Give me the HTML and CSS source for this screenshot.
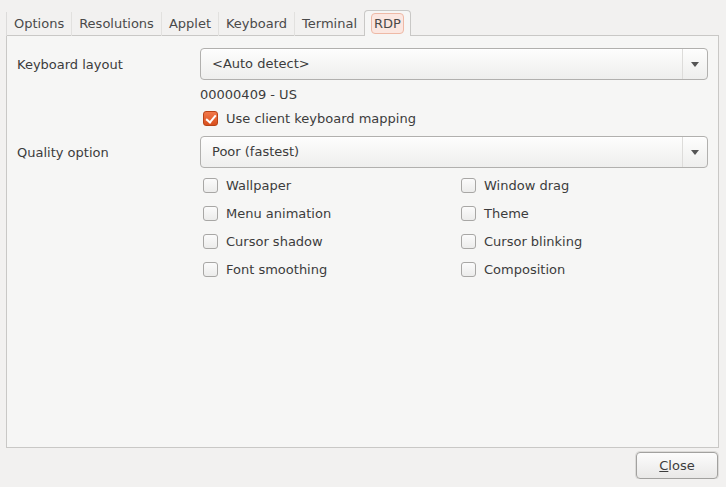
FILE: index.html
```
<!DOCTYPE html>
<html lang="en">
<head>
    <meta charset="UTF-8">
    <title>RDP</title>
    <link rel="stylesheet" href="styles.css">
</head>
<body>
    <div class="dialog">
        <ul class="tabs">
            <li>Options</li>
            <li>Resolutions</li>
            <li>Applet</li>
            <li>Keyboard</li>
            <li>Terminal</li>
            <li class="checked"><span class="focus">RDP</span></li>
        </ul>
        <div class="panel">
            <div class="row">
                <div class="label">Keyboard layout</div>
                <div class="combo"><span>&lt;Auto detect&gt;</span><i class="arrow"></i></div>
            </div>
            <div class="row info">
                <div class="label"></div>
                <div class="value">00000409 - US</div>
            </div>
            <div class="row mapping">
                <div class="label"></div>
                <label class="check on"><b></b>Use client keyboard mapping</label>
            </div>
            <div class="row">
                <div class="label">Quality option</div>
                <div class="combo"><span>Poor (fastest)</span><i class="arrow"></i></div>
            </div>
            <div class="row">
                <div class="label"></div>
                <div class="options">
                    <label class="check"><b></b>Wallpaper</label>
                    <label class="check"><b></b>Window drag</label>
                    <label class="check"><b></b>Menu animation</label>
                    <label class="check"><b></b>Theme</label>
                    <label class="check"><b></b>Cursor shadow</label>
                    <label class="check"><b></b>Cursor blinking</label>
                    <label class="check"><b></b>Font smoothing</label>
                    <label class="check"><b></b>Composition</label>
                </div>
            </div>
        </div>
        <div class="footer">
            <button class="btn"><u>C</u>lose</button>
        </div>
    </div>
</body>
</html>
```

FILE: styles.css
```
* {
    padding: 0;
    margin: 0;
    box-sizing: border-box;
}

body {
    background: #f2f1f0;
    font-family: "DejaVu Sans", sans-serif;
    font-size: 13px;
    color: #3c3c3c;
}

.dialog {
    padding: 10px 7px 0 6px;
}

.tabs {
    list-style: none;
    display: flex;
    height: 26px;
    position: relative;
    z-index: 1;
}

.tabs>li {
    height: 24px;
    margin-top: 2px;
    padding: 0 7px;
    line-height: 24px;
    border-left: 1px solid #e2e1df;
    color: #4a4a4a;
}

.tabs>li:first-child {
    border-left-color: #dcdbda;
}

.tabs .checked {
    margin-top: 0;
    height: 26px;
    padding: 2px 6px 0;
    background: #f6f6f5;
    border: 1px solid #c9c8c6;
    border-bottom: none;
    border-radius: 4px 4px 0 0;
}

.focus {
    display: block;
    height: 21px;
    line-height: 20px;
    padding: 0 2px;
    border: 1px solid #eeb9a6;
    border-radius: 4px;
    background: #fbe7e1;
}

.panel {
    height: 413px;
    margin-top: -1px;
    background: #f6f6f5;
    border: 1px solid #c9c8c6;
    padding: 12px 10px 0 10px;
}

.row {
    display: flex;
    align-items: center;
}

.row.info {
    height: 28px;
}

.row.mapping {
    height: 20px;
    margin-bottom: 8px;
}

.label {
    width: 183px;
    flex: none;
}

.combo {
    flex: 1;
    display: flex;
    height: 32px;
    border: 1px solid #b1b0ae;
    border-radius: 4px;
    background: linear-gradient(#fdfdfd, #eeeeed);
    box-shadow: inset 0 1px 0 #fff;
}

.combo span {
    flex: 1;
    padding-left: 11px;
    line-height: 29px;
}

.arrow {
    width: 25px;
    border-left: 1px solid #dddcda;
    position: relative;
}

.arrow:after {
    content: '';
    position: absolute;
    left: 8px;
    top: 13px;
    border-left: 4px solid transparent;
    border-right: 4px solid transparent;
    border-top: 5px solid #555;
}

.check {
    display: flex;
    align-items: center;
    height: 28px;
}

.mapping .check {
    height: 20px;
}

.check b {
    width: 15px;
    height: 15px;
    margin: 0 8px 0 3px;
    border: 1px solid #a8a7a5;
    border-radius: 3px;
    background: linear-gradient(#fbfbfb, #ececeb);
}

.check.on b {
    border-color: #b84418;
    background: linear-gradient(#f2784a, #d9501e);
    position: relative;
}

.check.on b:after {
    content: '';
    position: absolute;
    left: 4px;
    top: 1px;
    width: 4px;
    height: 8px;
    border-right: 2px solid #fff;
    border-bottom: 2px solid #fff;
    transform: rotate(40deg);
}

.options {
    flex: 1;
    display: grid;
    grid-template-columns: 258px 1fr;
    padding-top: 3px;
}

.footer {
    display: flex;
    justify-content: flex-end;
    padding: 4px 1px 0 0;
}

.btn {
    width: 82px;
    height: 27px;
    font: inherit;
    color: #3c3c3c;
    border: 1px solid #a2a19f;
    border-radius: 4px;
    background: linear-gradient(#fcfcfc, #e9e8e7);
    box-shadow: 0 0 0 1px #dcdbd9;
}
```
